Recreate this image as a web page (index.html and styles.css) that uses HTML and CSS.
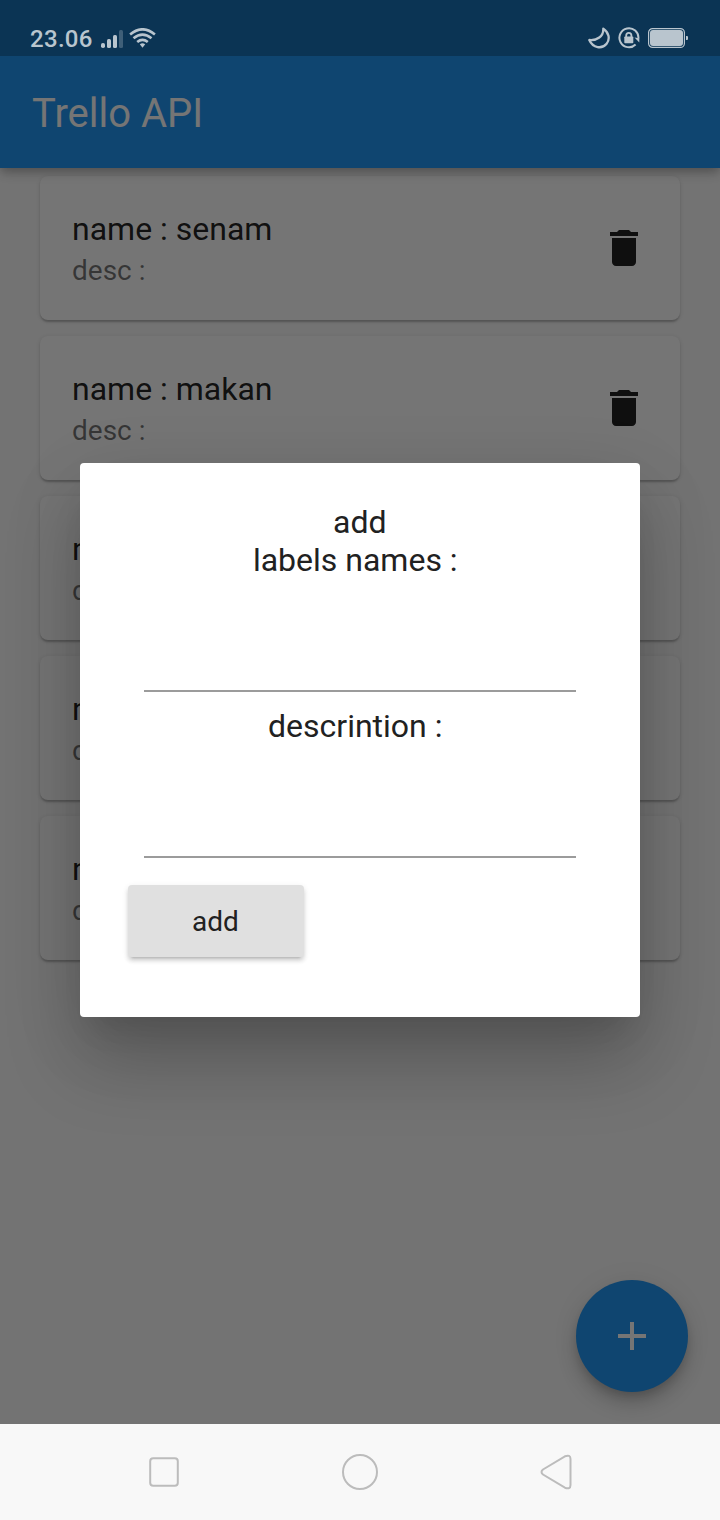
FILE: index.html
```html
<!DOCTYPE html>
<html lang="en">
<head>
<meta charset="utf-8">
<title>Trello API</title>
<link rel="stylesheet" href="styles.css">
</head>
<body>
<div class="screen">
  <div class="app">
    <header class="appbar"><h1 class="appbar-title">Trello API</h1></header>
    <main class="list">
      <article class="card"><div><div class="name">name : senam</div><div class="desc">desc :</div></div><svg class="trash" viewBox="0 0 24 24"><path d="M6 19c0 1.100.9 2 2 2h8c1.100 0 2-.9 2-2V7H6v12zM19 4h-3.500l-1-1h-5l-1 1H5v2h14V4z"/></svg></article>
      <article class="card"><div><div class="name">name : makan</div><div class="desc">desc :</div></div><svg class="trash" viewBox="0 0 24 24"><path d="M6 19c0 1.100.9 2 2 2h8c1.100 0 2-.9 2-2V7H6v12zM19 4h-3.500l-1-1h-5l-1 1H5v2h14V4z"/></svg></article>
      <article class="card"><div><div class="name">n</div><div class="desc">d</div></div></article>
      <article class="card"><div><div class="name">n</div><div class="desc">d</div></div></article>
      <article class="card"><div><div class="name">n</div><div class="desc">d</div></div></article>
    </main>
    <button class="fab" aria-label="Add"><svg viewBox="0 0 48 48" width="48" height="48"><path d="M38 26H26v12h-4V26H10v-4h12V10h4v12h12z" fill="#fff"/></svg></button>
  </div>
  <div class="scrim">
    <section class="dialog">
      <div class="label">add</div>
      <div class="label">labels names :</div>
      <div class="field"></div>
      <div class="label second">descrintion :</div>
      <div class="field"></div>
      <button class="add">add</button>
    </section>
  </div>
  <div class="status">
    <span class="clock">23.06</span>
    <svg class="signal" width="22" height="18" viewBox="0 0 22 18"><rect x="0" y="13" width="4" height="5" rx="1.800"/><rect x="6" y="9" width="4" height="9" rx="1.500"/><rect x="12" y="5" width="4" height="13" rx="1.500"/><rect x="18" y="0" width="4" height="18" rx="1.500" opacity=".3"/></svg>
    <svg class="wifi" width="27" height="20" viewBox="0 0 27 20"><g fill="none" stroke="#b9c5ce" stroke-width="2.600"><path d="M1.100 6.500Q13.500-3.900 25.900 6.500"/><path d="M4.500 10.300Q13.500 2.900 22.500 10.300"/><path d="M8.200 14Q13.500 9.700 18.800 14"/></g><path d="M10.800 16.200Q13.500 14.100 16.200 16.200L13.500 19.800z"/></svg>
    <span class="spacer"></span>
    <svg class="moon" width="22" height="22" viewBox="0 0 22 22"><path d="M15.300 1.600C21 5.500 22.300 12 18.600 16.700C14 22.300 5 21.300 1.300 13C9 13.700 15.600 9.500 15.300 1.600z" fill="none" stroke="#b9c5ce" stroke-width="2.300" stroke-linejoin="round"/></svg>
    <svg class="lock" width="22" height="22" viewBox="0 0 22 22"><path d="M17.600 17.500A9.500 9.500 0 1 1 20.400 11.500" fill="none" stroke="#b9c5ce" stroke-width="2"/><path d="M16.500 10.500l4.800.8v4.200z"/><rect x="6.300" y="9.500" width="9" height="6.800" rx=".8"/><path d="M8.200 10V8.500a2.600 2.600 0 0 1 5.200 0V10" fill="none" stroke="#b9c5ce" stroke-width="1.800"/></svg>
    <svg class="battery" width="40" height="20" viewBox="0 0 40 20"><rect x=".6" y=".6" width="35.800" height="18.800" rx="4" fill="none" stroke="#b9c5ce" stroke-width="1.200"/><rect x="2" y="2" width="33" height="16" rx="3"/><path d="M38 8h1a1 1 0 0 1 1 1v2a1 1 0 0 1-1 1h-1z"/></svg>
  </div>
  <nav class="nav">
    <svg width="36" height="36" viewBox="0 0 36 36"><rect x="4.200" y="4.200" width="27.600" height="27.600" rx="3"/></svg>
    <svg width="36" height="36" viewBox="0 0 36 36"><circle cx="18" cy="18" r="17"/></svg>
    <svg width="36" height="36" viewBox="0 0 36 36"><path d="M5 15.500L26.900 2.300Q32.500.2 32.500 5V31Q32.500 35.800 26.900 33.700L5 20.500Q2 18 5 15.500z"/></svg>
  </nav>
</div>
</body>
</html>
```
FILE: styles.css
```css
* { box-sizing: border-box; }
body { margin: 0; font-family: Roboto, sans-serif; }
button { border: 0; padding: 0; font-family: inherit; }
.screen { position: relative; width: 720px; height: 1520px; overflow: hidden; display: flex; flex-direction: column; }
.app { position: relative; isolation: isolate; height: 1424px; background: #fafafa; overflow: hidden; }
.appbar { position: relative; z-index: 1; height: 168px; padding: 59px 32px 0; display: flex; align-items: center; background: linear-gradient(#1a71b8 56px, #2196f3 56px); box-shadow: 0 4px 8px -2px rgba(0,0,0,.16), 0 6px 10px rgba(0,0,0,.12), 0 2px 16px rgba(0,0,0,.08); }
.appbar-title { margin: 0; font-size: 40px; font-weight: 400; color: #fff; }
.list { padding: 8px 40px; display: flex; flex-direction: column; gap: 16px; }
.card { height: 144px; border-radius: 8px; background: #fff; padding: 0 32px; display: flex; align-items: center; justify-content: space-between; box-shadow: 0 4px 2px -2px rgba(0,0,0,.1), 0 2px 2px rgba(0,0,0,.12), 0 1px 4px rgba(0,0,0,.12); }
.name { font-size: 32px; line-height: 38px; color: rgba(0,0,0,.87); }
.desc { font-size: 28px; line-height: 33px; color: rgba(0,0,0,.54); margin-top: 6px; }
.trash { width: 48px; height: 48px; fill: #222; }
.fab { position: absolute; right: 32px; bottom: 32px; width: 112px; height: 112px; border-radius: 50%; background: #2196f3; display: flex; align-items: center; justify-content: center; box-shadow: 0 6px 10px -2px rgba(0,0,0,.16), 0 12px 20px rgba(0,0,0,.16), 0 2px 30px rgba(0,0,0,.06); }
.scrim { position: absolute; inset: 0 0 96px; overflow: hidden; background: rgba(0,0,0,.54); display: flex; justify-content: center; align-items: flex-start; padding-top: 463px; }
.dialog { width: 560px; height: 554px; border-radius: 4px; background: #fff; padding: 40px 48px; color: #212121; box-shadow: 0 22px 30px -14px rgba(0,0,0,.1), 0 44px 76px 2px rgba(0,0,0,.2), 0 18px 80px 4px rgba(0,0,0,.07); }
.label { font-size: 32px; line-height: 38px; text-align: center; padding-right: 9.500px; }
.label:first-child { padding-right: .5px; }
.second { margin-top: 15px; }
.field { margin: 0 16px; height: 113px; border-bottom: 2px solid #9b9b9b; }
.add { display: block; margin-top: 27px; width: 176px; height: 72px; border-radius: 4px; background: #e0e0e0; color: #212121; font-size: 28px; padding-right: 1px; box-shadow: 0 5px 2px -4px rgba(0,0,0,.14), 0 4px 4px rgba(0,0,0,.12), 0 2px 6px rgba(0,0,0,.1); }
.status { position: absolute; inset: 0 0 auto; height: 56px; display: flex; padding: 0 32px 0 30px; color: #b9c5ce; fill: #b9c5ce; }
.clock { font-size: 24px; font-weight: 500; line-height: 28px; margin-top: 25px; width: 71px; letter-spacing: .3px; }
.signal { margin-top: 30px; }
.wifi { margin: 28px 0 0 6px; }
.spacer { flex: 1; }
.moon { margin: 27px 8px 0 0; }
.lock { margin: 27px 8px 0 0; }
.battery { margin-top: 28px; }
.nav { height: 96px; background: #f8f8f8; display: flex; justify-content: space-between; align-items: center; padding: 0 146px; }
.nav svg { fill: none; stroke: #bcbcbc; stroke-width: 2; }
```
